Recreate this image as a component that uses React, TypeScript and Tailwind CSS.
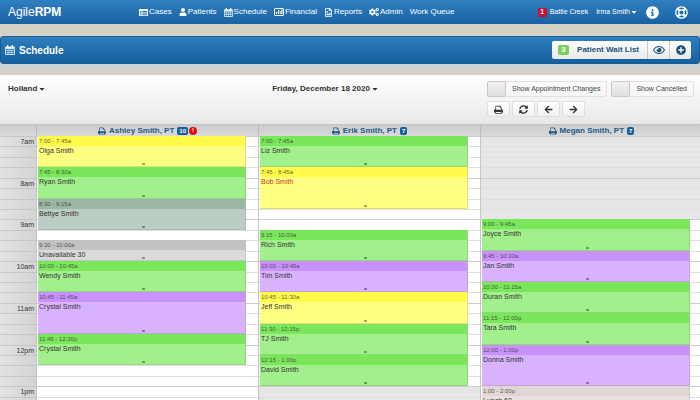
import { useState } from 'react';
import type { ReactNode } from 'react';
import {
  FaArrowLeft,
  FaArrowRight,
  FaCaretDown,
  FaCogs,
  FaInfoCircle,
  FaPlusCircle,
  FaRegEye,
  FaRegFileImage,
  FaRegLifeRing,
  FaSyncAlt,
  FaUser,
} from 'react-icons/fa';

type Tone = 'green' | 'yellow' | 'purple' | 'sage' | 'gray' | 'tan';

interface Appointment {
  start: number;
  end: number;
  time: string;
  name: string;
  tone: Tone;
  alert?: boolean;
}

interface Therapist {
  name: string;
  count: number;
  warning?: boolean;
  // closed hours, as [from, to]
  closed?: [number, number];
  appointments: Appointment[];
}

const FIRST_HOUR = 7;
const SLOTS = 28;
const slots = Array.from({ length: SLOTS }, (_, i) => i);
const hourLabels = ['7am', '8am', '9am', '10am', '11am', '12pm', '1pm'];

const tones: Record<Tone, { head: string; body: string }> = {
  green: { head: 'bg-[#7ae65a]', body: 'bg-[#a1f08b] border-[#8fd67c]' },
  yellow: { head: 'bg-[#fffb48]', body: 'bg-[#ffff82] border-[#e0df7c]' },
  purple: { head: 'bg-[#c891fb]', body: 'bg-[#dab3ff] border-[#c3a0e4]' },
  sage: { head: 'bg-[#9db5a5]', body: 'bg-[#bccec3] border-[#a9baaf]' },
  gray: { head: 'bg-[#c3c1c2]', body: 'bg-[#dadada] border-[#c4c4c4]' },
  tan: { head: 'bg-[#e0d6d4]', body: 'bg-[#e9e1df] border-[#d2cac8]' },
};

const therapists: Therapist[] = [
  {
    name: 'Ashley Smith, PT',
    count: 10,
    warning: true,
    appointments: [
      { start: 7, end: 7.75, time: '7:00 - 7:45a', name: 'Olga Smith', tone: 'yellow' },
      { start: 7.75, end: 8.5, time: '7:45 - 8:30a', name: 'Ryan Smith', tone: 'green' },
      { start: 8.5, end: 9.25, time: '8:30 - 9:15a', name: 'Bettye Smith', tone: 'sage' },
      { start: 9.5, end: 10, time: '9:30 - 10:00a', name: 'Unavailable 30', tone: 'gray' },
      { start: 10, end: 10.75, time: '10:00 - 10:45a', name: 'Wendy Smith', tone: 'green' },
      { start: 10.75, end: 11.75, time: '10:45 - 11:45a', name: 'Crystal Smith', tone: 'purple' },
      { start: 11.75, end: 12.5, time: '11:45 - 12:30p', name: 'Crystal Smith', tone: 'green' },
    ],
  },
  {
    name: 'Erik Smith, PT',
    count: 7,
    closed: [13, 14],
    appointments: [
      { start: 7, end: 7.75, time: '7:00 - 7:45a', name: 'Liz Smith', tone: 'green' },
      { start: 7.75, end: 8.75, time: '7:45 - 8:45a', name: 'Bob Smith', tone: 'yellow', alert: true },
      { start: 9.25, end: 10, time: '9:15 - 10:00a', name: 'Rich Smith', tone: 'green' },
      { start: 10, end: 10.75, time: '10:00 - 10:45a', name: 'Tim Smith', tone: 'purple' },
      { start: 10.75, end: 11.5, time: '10:45 - 11:30a', name: 'Jeff Smith', tone: 'yellow' },
      { start: 11.5, end: 12.25, time: '11:30 - 12:15p', name: 'TJ Smith', tone: 'green' },
      { start: 12.25, end: 13, time: '12:15 - 1:00p', name: 'David Smith', tone: 'green' },
    ],
  },
  {
    name: 'Megan Smith, PT',
    count: 7,
    closed: [7, 9],
    appointments: [
      { start: 9, end: 9.75, time: '9:00 - 9:45a', name: 'Joyce Smith', tone: 'green' },
      { start: 9.75, end: 10.5, time: '9:45 - 10:30a', name: 'Jan Smith', tone: 'purple' },
      { start: 10.5, end: 11.25, time: '10:30 - 11:15a', name: 'Duran Smith', tone: 'green' },
      { start: 11.25, end: 12, time: '11:15 - 12:00p', name: 'Tara Smith', tone: 'green' },
      { start: 12, end: 13, time: '12:00 - 1:00p', name: 'Donna Smith', tone: 'purple' },
      { start: 13, end: 14, time: '1:00 - 2:00p', name: 'Lunch 60', tone: 'tan' },
    ],
  },
];

const navItems = [
  { label: 'Cases', icon: <TableIcon /> },
  { label: 'Patients', icon: <FaUser className="h-2 w-2" /> },
  { label: 'Schedule', icon: <CalendarIcon className="h-[9px] w-[9px]" /> },
  { label: 'Financial', icon: <ChartIcon /> },
  { label: 'Reports', icon: <FaRegFileImage className="h-[9px] w-[9px]" /> },
  { label: 'Admin', icon: <FaCogs className="h-[10px] w-[10px]" /> },
  { label: 'Work Queue', icon: null },
];

function rowOf(hour: number) {
  return (hour - FIRST_HOUR) * 4 + 1;
}

function PrintIcon({ className }: { className?: string }) {
  return (
    <svg viewBox="0 0 1664 1664" fill="currentColor" className={className} aria-hidden="true">
      <path
        fillRule="evenodd"
        d="M384 1536h896v-256h-896v256zM384 896h896v-384h-160q-40 0-68-28t-28-68v-160h-640v640zM1536 960q0-26-19-45t-45-19-45 19-19 45 19 45 45 19 45-19 19-45zM1664 960v416q0 13-9.5 22.5t-22.5 9.5h-224v160q0 40-28 68t-68 28h-960q-40 0-68-28t-28-68v-160h-224q-13 0-22.5-9.5t-9.5-22.5v-416q0-79 56.5-135.5t135.5-56.5h64v-544q0-40 28-68t68-28h672q40 0 88 20t76 48l152 152q28 28 48 76t20 88v256h64q79 0 135.5 56.5t56.5 135.5z"
      />
    </svg>
  );
}

function CalendarIcon({ className }: { className?: string }) {
  return (
    <svg viewBox="0 0 20 20" fill="currentColor" className={className} aria-hidden="true">
      <path
        fillRule="evenodd"
        d="M4 0h2.5v3h7V0H16v3h2q1.5 0 1.5 1.5v14Q19.5 20 18 20H2Q.5 20 .5 18.5v-14Q.5 3 2 3h2zM2 7.5v3h3.5v-3zM6.500 7.5v3h3v-3zM10.500 7.5v3h3v-3zM14.500 7.5v3H18v-3zM2 11.5v3h3.5v-3zM6.500 11.5v3h3v-3zM10.500 11.5v3h3v-3zM14.500 11.5v3H18v-3zM2 15.5v3h3.5v-3zM6.500 15.5v3h3v-3zM10.500 15.5v3h3v-3zM14.500 15.5v3H18v-3z"
      />
    </svg>
  );
}

function TableIcon() {
  return (
    <svg viewBox="0 0 18 14" fill="currentColor" className="h-[7px] w-[9px]" aria-hidden="true">
      <path
        fillRule="evenodd"
        d="M1 0h16q1 0 1 1v12q0 1-1 1H1q-1 0-1-1V1q0-1 1-1zM2 4v2h3V4zM6.500 4v2H16V4zM2 7.200v2h3v-2zM6.500 7.200v2H16v-2zM2 10.400v2h3v-2zM6.500 10.400v2H16v-2z"
      />
    </svg>
  );
}

function ChartIcon() {
  return (
    <svg viewBox="0 0 20 16" className="h-2 w-[10px]" aria-hidden="true">
      <rect x="1" y="1" width="18" height="14" rx="1" fill="none" stroke="currentColor" strokeWidth="2" />
      <path d="M4 12V8h2.5v4zM8 12V4h2.5v8zM12 12V7h1.5v5zM14.500 12V3H17v9z" fill="currentColor" />
    </svg>
  );
}

function TopNav() {
  return (
    <header className="flex h-6 shrink-0 items-center bg-linear-to-b from-[#2f7fc1] to-[#1862a3] px-2 text-[8px] text-white">
      <a href="#home" className="w-[131px] shrink-0 text-[12px] leading-6">
        Agile<strong>RPM</strong>
      </a>
      <nav className="flex items-center gap-[7px]">
        {navItems.map((item) => (
          <a key={item.label} href="#nav" className="flex items-center gap-px whitespace-nowrap">
            {item.icon}
            {item.label}
          </a>
        ))}
      </nav>
      <div className="ml-auto flex items-center gap-2 text-[7px] whitespace-nowrap">
        <a href="#location" className="flex items-center gap-[3px]">
          <span className="flex h-[9px] w-[9px] items-center justify-center rounded-[1px] bg-[#c4122f] font-bold">1</span>
          Battle Creek
        </a>
        <button type="button" className="flex items-center">
          Irma Smith
          <FaCaretDown className="h-2 w-2" />
        </button>
        <button type="button" aria-label="Information">
          <FaInfoCircle className="h-[13px] w-[13px]" />
        </button>
        <button type="button" aria-label="Help" className="mr-1 ml-2">
          <FaRegLifeRing className="h-[13px] w-[13px]" />
        </button>
      </div>
    </header>
  );
}

function TitleBar() {
  return (
    <div className="mt-3 flex h-7 shrink-0 items-center justify-between rounded-[3px] border border-[#1a5c96] bg-linear-to-b from-[#2f7dbd] to-[#14609f] pr-2 pl-1">
      <h1 className="flex items-center gap-1 text-[10px] font-bold text-white">
        <CalendarIcon className="h-[10px] w-[10px]" />
        Schedule
      </h1>
      <div className="flex h-[18px] divide-x divide-[#c9c9c9] rounded-[2px] bg-linear-to-b from-white to-[#e9e9e9] text-[#17507f]">
        <button type="button" className="flex items-center gap-2 pr-2 pl-[6px] text-[8px] font-bold whitespace-nowrap">
          <span className="flex h-[10px] w-[11px] items-center justify-center rounded-[2px] bg-[#7ccf5c] text-white">3</span>
          Patient Wait List
        </button>
        <button type="button" aria-label="Preview" className="flex w-[22px] items-center justify-center">
          <FaRegEye className="h-3 w-3" />
        </button>
        <button type="button" aria-label="Add" className="flex w-[21px] items-center justify-center">
          <FaPlusCircle className="h-[10px] w-[10px]" />
        </button>
      </div>
    </div>
  );
}

function Toggle({ id, label }: { id: string; label: string }) {
  const [checked, setChecked] = useState(false);

  return (
    <div className="flex h-4 items-center rounded-[2px] border border-[#eadde2]">
      <input
        id={id}
        type="checkbox"
        checked={checked}
        onChange={(e) => setChecked(e.target.checked)}
        className="-my-px -ml-px h-4 w-[19px] appearance-none rounded-[2px] border border-[#cdc6c9] bg-linear-to-b from-[#f3f0f2] to-[#e2dfe1] checked:bg-[#9cc4e4]"
      />
      <label htmlFor={id} className="px-[6px] text-[7px] whitespace-nowrap text-[#444]">
        {label}
      </label>
    </div>
  );
}

function ToolButton({ label, children }: { label: string; children: ReactNode }) {
  return (
    <button
      type="button"
      aria-label={label}
      className="flex h-4 w-[23px] items-center justify-center rounded-[2px] border border-[#dedede] bg-linear-to-b from-white to-[#f0f0f0] text-[9px] text-[#333]"
    >
      {children}
    </button>
  );
}

function Toolbar() {
  return (
    <div className="flex items-start bg-linear-to-b from-white to-[#e8e8e8] pt-[6px] pr-[6px] pb-[7px] pl-2 text-[8px] font-bold text-[#333]">
      <div className="flex h-4 w-[156px] shrink-0 items-center">
        <button type="button" className="flex items-center gap-px">
          Holland
          <FaCaretDown className="h-2 w-2" />
        </button>
      </div>
      <div className="flex h-4 grow items-center justify-center">
        <button type="button" className="flex items-center gap-px whitespace-nowrap">
          Friday, December 18 2020
          <FaCaretDown className="h-2 w-2" />
        </button>
      </div>
      <div className="shrink-0 font-normal">
        <div className="flex gap-1">
          <Toggle id="show-changes" label="Show Appointment Changes" />
          <Toggle id="show-cancelled" label="Show Cancelled" />
        </div>
        <div className="mt-1 flex gap-[2px]">
          <ToolButton label="Print">
            <PrintIcon className="h-[9px] w-[9px]" />
          </ToolButton>
          <ToolButton label="Refresh">
            <FaSyncAlt />
          </ToolButton>
          <ToolButton label="Previous day">
            <FaArrowLeft />
          </ToolButton>
          <ToolButton label="Next day">
            <FaArrowRight />
          </ToolButton>
        </div>
      </div>
    </div>
  );
}

function AppointmentCard({ appointment }: { appointment: Appointment }) {
  const tone = tones[appointment.tone];

  return (
    <article
      className={`relative z-10 col-start-1 mr-3 ml-px min-h-0 overflow-hidden border-r border-b text-[#333] ${tone.body}`}
      style={{ gridRow: `${rowOf(appointment.start)} / ${rowOf(appointment.end)}` }}
    >
      <p className={`pl-px text-[6px] leading-[10px] text-[#333]/80 ${tone.head}`}>{appointment.time}</p>
      <h3 className={`pl-px text-[7px] leading-[9px] ${appointment.alert ? 'text-[#c8361c]' : ''}`}>{appointment.name}</h3>
      {/* resize grip */}
      <span className="absolute bottom-px left-1/2 h-[2px] w-[3px] bg-black/35" />
    </article>
  );
}

function DayColumn({ therapist }: { therapist: Therapist }) {
  return (
    <section className="grid min-h-0 grid-cols-1 grid-rows-[repeat(28,minmax(0,1fr))] border-l border-[#c4c4c4] bg-white">
      {therapist.closed && (
        <div
          className="col-start-1 bg-[#e6e6e6]"
          style={{ gridRow: `${rowOf(therapist.closed[0])} / ${rowOf(therapist.closed[1])}` }}
        />
      )}
      {slots.map((slot) => (
        <div
          key={slot}
          className={`col-start-1 border-t ${slot % 4 === 0 ? 'border-[#cccccc]' : 'border-[#dfdfdf]'}`}
          style={{ gridRow: slot + 1 }}
        />
      ))}
      {therapist.appointments.map((appointment) => (
        <AppointmentCard key={appointment.time} appointment={appointment} />
      ))}
    </section>
  );
}

function Calendar() {
  return (
    <div className="-mr-[2px] min-h-0 grow overflow-hidden">
      <div className="grid h-3 grid-cols-[36px_repeat(3,minmax(0,1fr))] border-t border-[#c2c2c2] bg-linear-to-b from-[#cccccc] to-[#d9d9d9]">
        <span />
        {therapists.map((therapist) => (
          <h2
            key={therapist.name}
            className="flex items-center justify-center gap-[3px] border-l border-[#bdbdbd] text-[8px] leading-[11px] font-bold whitespace-nowrap text-[#1d5a8c]"
          >
            <PrintIcon className="h-2 w-2" />
            {therapist.name}
            <span className="rounded-[2px] bg-[#14609f] px-[2px] text-[6px] leading-2 text-white">{therapist.count}</span>
            {therapist.warning && (
              <span className="-ml-[2px] flex h-2 w-2 items-center justify-center rounded-full bg-[#e01010] text-[6px] text-white">
                !
              </span>
            )}
          </h2>
        ))}
      </div>
      <div className="grid h-[292px] grid-cols-[36px_repeat(3,minmax(0,1fr))] grid-rows-[minmax(0,1fr)]">
        <div className="grid min-h-0 grid-rows-[repeat(28,minmax(0,1fr))] bg-[#d9d9d9]">
          {slots.map((slot) => (
            <div
              key={slot}
              className="border-t border-[#c6c6c6] bg-linear-to-r from-[#e2e2e2] to-[#d4d4d4] pr-[2px] text-right text-[7px] leading-[10px] text-[#333]"
            >
              {slot % 4 === 0 ? hourLabels[slot / 4] : null}
            </div>
          ))}
        </div>
        {therapists.map((therapist) => (
          <DayColumn key={therapist.name} therapist={therapist} />
        ))}
      </div>
    </div>
  );
}

export default function App() {
  return (
    <div className="flex h-screen flex-col overflow-hidden bg-[#d6d1c7] font-['Liberation_Sans',Arial,sans-serif]">
      <TopNav />
      <TitleBar />
      <div className="h-[6px] shrink-0 bg-[#cbd1d4]" />
      <main className="mt-[5px] flex min-h-0 grow flex-col">
        <Toolbar />
        <Calendar />
      </main>
    </div>
  );
}
